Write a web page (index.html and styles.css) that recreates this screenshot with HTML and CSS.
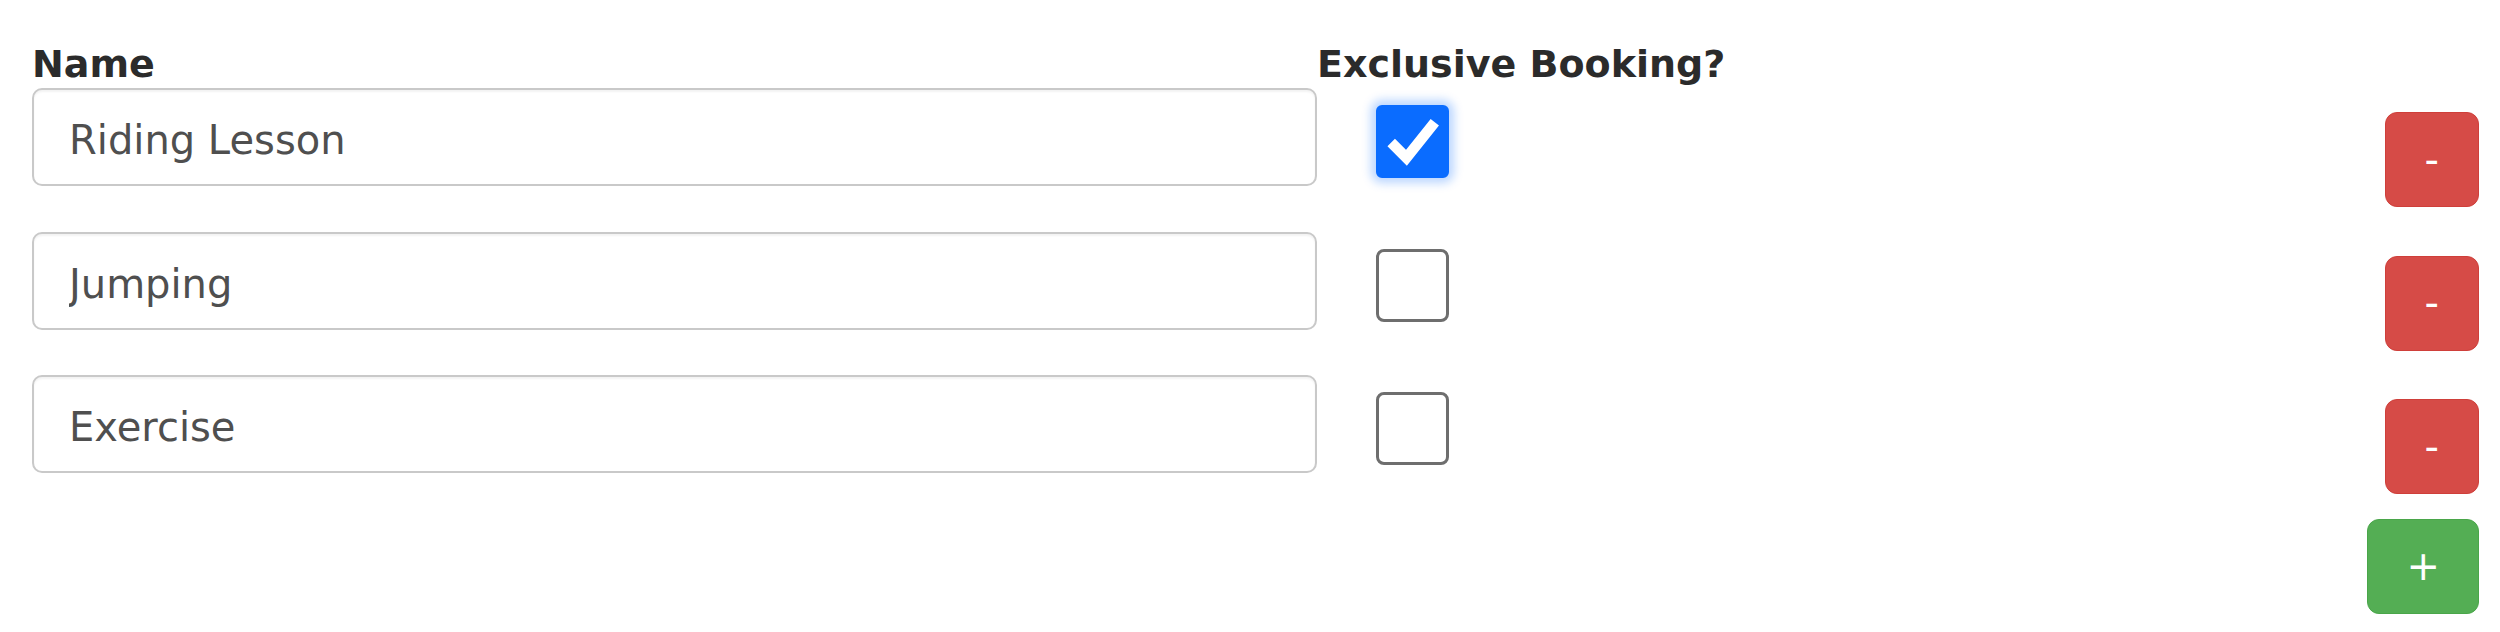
FILE: index.html
```html
<!DOCTYPE html>
<html lang="en">
<head>
    <meta charset="UTF-8">
    <meta name="viewport" content="width=device-width, initial-scale=1.0">
    <title>Booking Types</title>
    <link rel="stylesheet" href="styles.css">
</head>
<body>
    <form class="sheet" id="bookingTypes">
        <div class="head">
            <label for="type1">Name</label>
            <label>Exclusive Booking?</label>
        </div>

        <div class="rows">
            <div class="row">
                <input type="text" id="type1" name="name[]" value="Riding Lesson">
                <label class="tick">
                    <input type="checkbox" name="exclusive[]" checked>
                    <svg class="mark" viewBox="0 0 72 72"><polyline points="15,37 30,52 58,17"/></svg>
                </label>
                <button type="button" class="btn btn-remove">-</button>
            </div>

            <div class="row">
                <input type="text" name="name[]" value="Jumping">
                <label class="tick">
                    <input type="checkbox" name="exclusive[]">
                    <svg class="mark" viewBox="0 0 72 72"><polyline points="15,37 30,52 58,17"/></svg>
                </label>
                <button type="button" class="btn btn-remove">-</button>
            </div>

            <div class="row">
                <input type="text" name="name[]" value="Exercise">
                <label class="tick">
                    <input type="checkbox" name="exclusive[]">
                    <svg class="mark" viewBox="0 0 72 72"><polyline points="15,37 30,52 58,17"/></svg>
                </label>
                <button type="button" class="btn btn-remove">-</button>
            </div>

            <div class="add-row">
                <button type="button" class="btn btn-add">+</button>
            </div>
        </div>
    </form>
</body>
</html>
```

FILE: styles.css
```css
body {
    font-family: 'DejaVu Sans', Verdana, Geneva, sans-serif;
    margin: 0;
    padding: 0;
    background-color: #fff;
}

.sheet {
    padding: 43px 21px 0 32px;
}

.head {
    display: grid;
    grid-template-columns: 1285px 1fr;
    margin-bottom: 2px;
}

.head label {
    font-size: 38px;
    line-height: 43px;
    font-weight: bold;
    color: #2b2b2b;
}

.rows {
    display: flex;
    flex-direction: column;
    gap: 24.5px;
}

.row {
    display: grid;
    grid-template-columns: 1285px 1fr auto;
    align-items: start;
}

.row input[type="text"] {
    width: 100%;
    height: 98px;
    padding: 6px 35px 0;
    border: 2px solid #c9c9c9;
    border-radius: 10px;
    box-sizing: border-box;
    box-shadow: inset 0 2px 2px rgba(0, 0, 0, 0.05);
    font-family: inherit;
    font-size: 40px;
    color: #4f4f4f;
    outline: none;
}

.tick {
    position: relative;
    width: 73px;
    height: 73px;
    margin: 17px 0 0 59px;
}

.tick input {
    appearance: none;
    -webkit-appearance: none;
    display: block;
    width: 73px;
    height: 73px;
    margin: 0;
    border: 3px solid #6e6e6e;
    border-radius: 8px;
    box-sizing: border-box;
    background-color: #fff;
    cursor: pointer;
}

.tick input:checked {
    background-color: #0a6cff;
    border-color: #0a6cff;
    border-radius: 6px;
    box-shadow: 0 0 10px 5px rgba(10, 108, 255, 0.28);
}

.mark {
    position: absolute;
    top: 0;
    left: 0;
    width: 73px;
    height: 73px;
    display: none;
    pointer-events: none;
}

.mark polyline {
    fill: none;
    stroke: #fff;
    stroke-width: 10.5;
    stroke-linecap: butt;
    stroke-linejoin: miter;
}

.tick input:checked + .mark {
    display: block;
}

.btn {
    height: 95px;
    margin-top: 24px;
    padding: 0 39px;
    border: 1px solid transparent;
    border-radius: 12px;
    font-family: inherit;
    font-size: 40px;
    line-height: 1;
    color: #fff;
    cursor: pointer;
}

.btn-remove {
    background-color: #d64b47;
    border-color: #cf3f3a;
}

.btn-remove:hover {
    background-color: #c9302c;
}

.add-row {
    display: flex;
    justify-content: flex-end;
    margin-top: -24px;
}

.btn-add {
    padding: 0 38px;
    background-color: #54ae54;
    border-color: #4aa64a;
}

.btn-add:hover {
    background-color: #449d44;
}
```
